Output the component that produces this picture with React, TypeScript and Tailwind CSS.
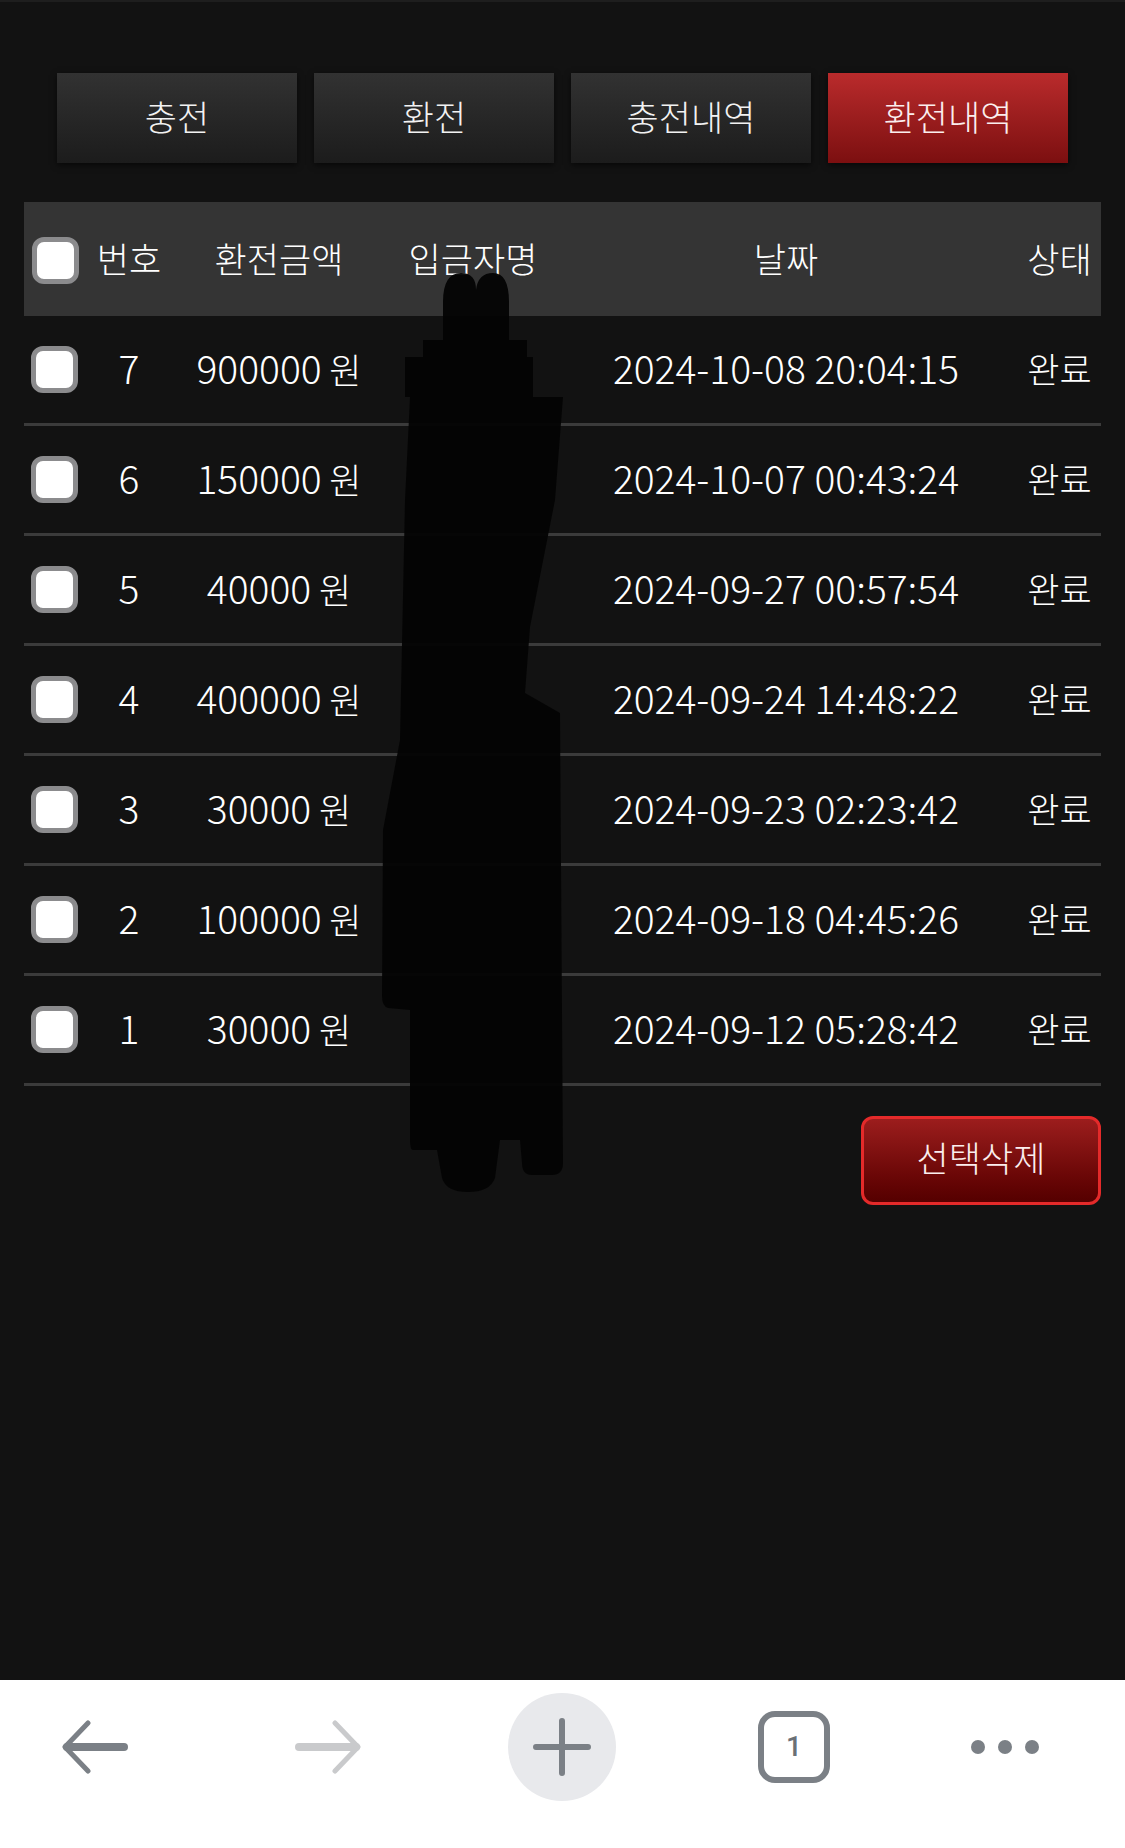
import React from "react";

const rows = [
  { no: 7, amount: "900000", date: "2024-10-08 20:04:15" },
  { no: 6, amount: "150000", date: "2024-10-07 00:43:24" },
  { no: 5, amount: "40000", date: "2024-09-27 00:57:54" },
  { no: 4, amount: "400000", date: "2024-09-24 14:48:22" },
  { no: 3, amount: "30000", date: "2024-09-23 02:23:42" },
  { no: 2, amount: "100000", date: "2024-09-18 04:45:26" },
  { no: 1, amount: "30000", date: "2024-09-12 05:28:42" },
];

const tabs = ["충전", "환전", "충전내역", "환전내역"];

function Box() {
  return <div className="w-[47px] h-[47px] rounded-[12px] border-[5px] border-[#8b8b8d] bg-white" />;
}

const gridCols = "grid grid-cols-[66px_78px_222px_166px_460px_85px]";

export default function App() {
  return (
    <div className="relative w-[1125px] h-[1848px] bg-[#121212] flex flex-col overflow-hidden font-['Noto_Sans_CJK_KR','Noto_Sans',sans-serif] font-light text-white">
      <div className="h-[2px] bg-[#1e1e1e]" />
      <div className="flex-1 flex flex-col">
        {/* tabs */}
        <div className="mt-[71px] px-[57px] grid grid-cols-4 gap-[17px]">
          {tabs.map((t, i) => (
            <div
              key={t}
              className={
                i === 3
                  ? "h-[90px] flex items-center justify-center text-[35px] pb-[4px] bg-gradient-to-b from-[#ba2b2c] to-[#7c0f10] text-[#fbeeee] shadow-[0_2px_6px_rgba(0,0,0,0.6)]"
                  : "h-[90px] flex items-center justify-center text-[35px] pb-[4px] bg-gradient-to-b from-[#323232] to-[#1c1c1c] text-[#f2f2f2] shadow-[0_2px_6px_rgba(0,0,0,0.6)]"
              }
            >
              {t}
            </div>
          ))}
        </div>

        {/* table */}
        <div className="mt-[39px] mx-[24px]">
          <div className={`${gridCols} h-[114px] bg-[#343434] items-center text-[35px]`}>
            <div className="pl-[8px] pt-[2px]">
              <Box />
            </div>
            <div className="text-center pb-[2px]">번호</div>
            <div className="text-center pb-[2px]">환전금액</div>
            <div className="text-center pb-[2px]">입금자명</div>
            <div className="text-center pb-[2px]">날짜</div>
            <div className="text-center pb-[2px] pl-[2px]">상태</div>
          </div>
          {rows.map((r) => (
            <div
              key={r.no}
              className={`${gridCols} h-[110px] border-b-[3px] border-[#3b3b3b] items-center`}
            >
              <div className="pl-[7px]">
                <Box />
              </div>
              <div className="text-center text-[39px] leading-none pb-[4px]">{r.no}</div>
              <div className="text-center leading-none pb-[4px]">
                <span className="text-[39px]">{r.amount}</span>
                <span className="text-[35px]"> 원</span>
              </div>
              <div />
              <div className="text-center text-[39px] leading-none pb-[4px]">{r.date}</div>
              <div className="text-center text-[35px] leading-none pb-[4px] pl-[2px]">완료</div>
            </div>
          ))}
        </div>

        <div className="mt-[30px] mr-[24px] self-end">
          <button className="w-[240px] h-[89px] rounded-[12px] border-[3px] border-[#e42a2a] bg-gradient-to-b from-[#9c1d1d] to-[#550000] text-[35px] font-light text-[#fbeeee] flex items-center justify-center pb-[6px]">
            선택삭제
          </button>
        </div>
      </div>

      {/* bottom browser bar */}
      <div className="h-[168px] bg-white">
        <div className="h-[134px] flex items-center">
          <svg className="ml-[61px]" width="68" height="54" viewBox="0 0 68 54">
            <path d="M6 27 H63" stroke="#7b8086" strokeWidth="8" strokeLinecap="round" fill="none" />
            <path d="M27 3 L4 27 L27 51" stroke="#7b8086" strokeWidth="5" strokeLinecap="round" strokeLinejoin="round" fill="none" />
          </svg>
          <svg className="ml-[165px]" width="68" height="54" viewBox="0 0 68 54">
            <path d="M5 27 H62" stroke="#c9cacc" strokeWidth="8" strokeLinecap="round" fill="none" />
            <path d="M41 3 L64 27 L41 51" stroke="#c9cacc" strokeWidth="5" strokeLinecap="round" strokeLinejoin="round" fill="none" />
          </svg>
          <div className="ml-[146px] w-[108px] h-[108px] rounded-full bg-[#e8e9ec] flex items-center justify-center">
            <svg width="58" height="58" viewBox="0 0 58 58">
              <path d="M29 3 V55 M3 29 H55" stroke="#7b8086" strokeWidth="6" strokeLinecap="round" fill="none" />
            </svg>
          </div>
          <div className="ml-[142px] w-[72px] h-[72px] rounded-[17px] border-[6px] border-[#7b8086] flex items-center justify-center text-[28px] text-[#6b7076] font-['Roboto',sans-serif] font-medium leading-none">
            1
          </div>
          <svg className="ml-[140px]" width="70" height="16" viewBox="0 0 70 16">
            <circle cx="8" cy="8" r="7" fill="#7b8086" />
            <circle cx="35" cy="8" r="7" fill="#7b8086" />
            <circle cx="62" cy="8" r="7" fill="#7b8086" />
          </svg>
        </div>
      </div>

      {/* redaction scribble over the depositor column */}
      <svg
        className="absolute top-0 left-0 pointer-events-none"
        width="1125"
        height="1848"
        viewBox="0 0 1125 1848"
      >
        <path
          d="M443 302 Q443 273 461 273 Q476 273 476 290 Q478 273 493 273 Q509 273 509 302 L509 340 L527 340 L527 357 L533 357 L533 397 L563 397 L555 500 L530 627 L525 693 L560 713 L563 1163 Q563 1175 552 1175 L532 1175 Q522 1175 522 1163 L520 1140 L500 1140 L495 1178 Q490 1192 468 1192 Q446 1192 442 1178 L437 1150 L413 1150 Q410 1150 410 1140 L410 1010 L388 1008 Q382 1006 382 996 L383 830 L400 740 L405 500 L410 397 L405 397 L405 357 L423 357 L423 340 L443 340 Z"
          fill="#040404"
          fillOpacity="0.96"
        />
      </svg>
    </div>
  );
}
